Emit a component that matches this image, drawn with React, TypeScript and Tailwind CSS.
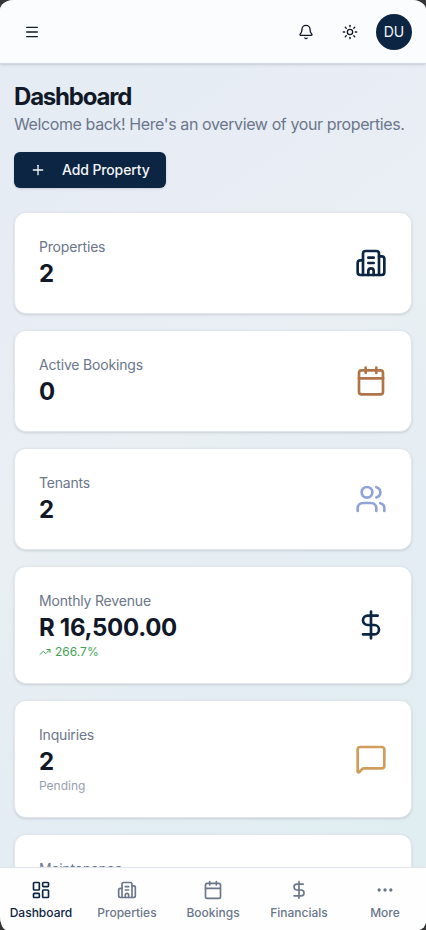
import type { LucideIcon } from "lucide-react";
import {
  Bell,
  Building2,
  Calendar,
  DollarSign,
  Ellipsis,
  LayoutDashboard,
  Menu,
  MessageSquare,
  Plus,
  Sun,
  TrendingUp,
  Users,
} from "lucide-react";
import clsx from "clsx";

type Stat = {
  label: string;
  value?: string;
  icon?: LucideIcon;
  iconClass?: string;
  trend?: string;
  note?: string;
};

const stats: Stat[] = [
  { label: "Properties", value: "2", icon: Building2, iconClass: "text-[#0c2543]" },
  { label: "Active Bookings", value: "0", icon: Calendar, iconClass: "text-[#b07448]" },
  { label: "Tenants", value: "2", icon: Users, iconClass: "text-[#8fa3d9]" },
  {
    label: "Monthly Revenue",
    value: "R 16,500.00",
    icon: DollarSign,
    iconClass: "text-[#0c2543]",
    trend: "266.7%",
  },
  {
    label: "Inquiries",
    value: "2",
    icon: MessageSquare,
    iconClass: "text-[#d19c5c]",
    note: "Pending",
  },
  { label: "Maintenance" },
];

const navItems: { label: string; icon: LucideIcon; active?: boolean }[] = [
  { label: "Dashboard", icon: LayoutDashboard, active: true },
  { label: "Properties", icon: Building2 },
  { label: "Bookings", icon: Calendar },
  { label: "Financials", icon: DollarSign },
  { label: "More", icon: Ellipsis },
];

function IconButton({ icon: Icon, label }: { icon: LucideIcon; label: string }) {
  return (
    <button aria-label={label} className="flex size-9 items-center justify-center rounded-md">
      <Icon className="size-4" />
    </button>
  );
}

function TopBar() {
  return (
    <header className="flex h-16 shrink-0 items-center justify-between border-b border-[#d3d9e1] bg-[#fbfcfe] px-3.5 shadow-sm">
      <IconButton icon={Menu} label="Menu" />
      <div className="flex items-center gap-2">
        <IconButton icon={Bell} label="Notifications" />
        <IconButton icon={Sun} label="Theme" />
        <div className="flex size-9 items-center justify-center rounded-full bg-[#0c2543] text-sm text-[#f3f6fa]">
          DU
        </div>
      </div>
    </header>
  );
}

function StatCard({ label, value, icon: Icon, iconClass, trend, note }: Stat) {
  return (
    <div className="flex shrink-0 items-center justify-between rounded-xl border border-[#e1e6ed] bg-white p-6 shadow-sm">
      <div className="-mb-px">
        <p className="text-sm tracking-[-0.18px] text-[#6b768a]">{label}</p>
        <p className="min-h-8 pt-px text-2xl font-bold tracking-[-0.3px]">{value}</p>
        {trend ? (
          <p className="flex items-center gap-1 text-xs text-[#43a351]">
            <TrendingUp className="size-3" />
            {trend}
          </p>
        ) : null}
        {note ? <p className="text-xs text-[#98a1b0]">{note}</p> : null}
      </div>
      {Icon ? <Icon className={clsx("size-8", iconClass)} /> : null}
    </div>
  );
}

function BottomNav() {
  return (
    <nav className="flex h-[63px] shrink-0 justify-center border-t border-[#dfe4eb] bg-[#fefefe]">
      {navItems.map(({ label, icon: Icon, active }) => (
        <button
          key={label}
          className={clsx(
            "flex w-[86px] shrink-0 flex-col items-center gap-1 pt-3 text-xs font-medium",
            active ? "text-[#0c2543]" : "text-[#6b768a]",
          )}
        >
          <Icon className="size-5" />
          <span className="pt-px">{label}</span>
        </button>
      ))}
    </nav>
  );
}

export default function App() {
  return (
    <div className="h-[930px] w-[426px] overflow-hidden bg-[#363636] font-['Inter',sans-serif] text-[#111827]">
      <div className="flex h-full flex-col overflow-hidden rounded-[14px_14px_8px_7px/10px_10px_9px_14px] bg-linear-[145deg,#e4ebf3_0%,#e8edf5_25%,#e9eff3_45%,#e3edf3_70%,#dfeef0_100%]">
        <TopBar />
        <main className="min-h-0 flex-1 overflow-hidden px-3.5 pt-[17px]">
          <h1 className="text-2xl font-bold tracking-[-1.2px]">Dashboard</h1>
          <p className="-mt-px whitespace-nowrap tracking-[-0.39px] text-[#6b768a]">
            Welcome back! Here's an overview of your properties.
          </p>
          <button className="mt-4 flex h-9 items-center gap-4 rounded-md bg-[#0c2543] px-4 text-sm font-medium tracking-[-0.12px] text-[#f3f6fa] shadow-sm">
            <Plus className="size-4" />
            Add Property
          </button>
          <div className="mt-6 flex flex-col gap-4">
            {stats.map((stat) => (
              <StatCard key={stat.label} {...stat} />
            ))}
          </div>
        </main>
        <BottomNav />
      </div>
    </div>
  );
}
